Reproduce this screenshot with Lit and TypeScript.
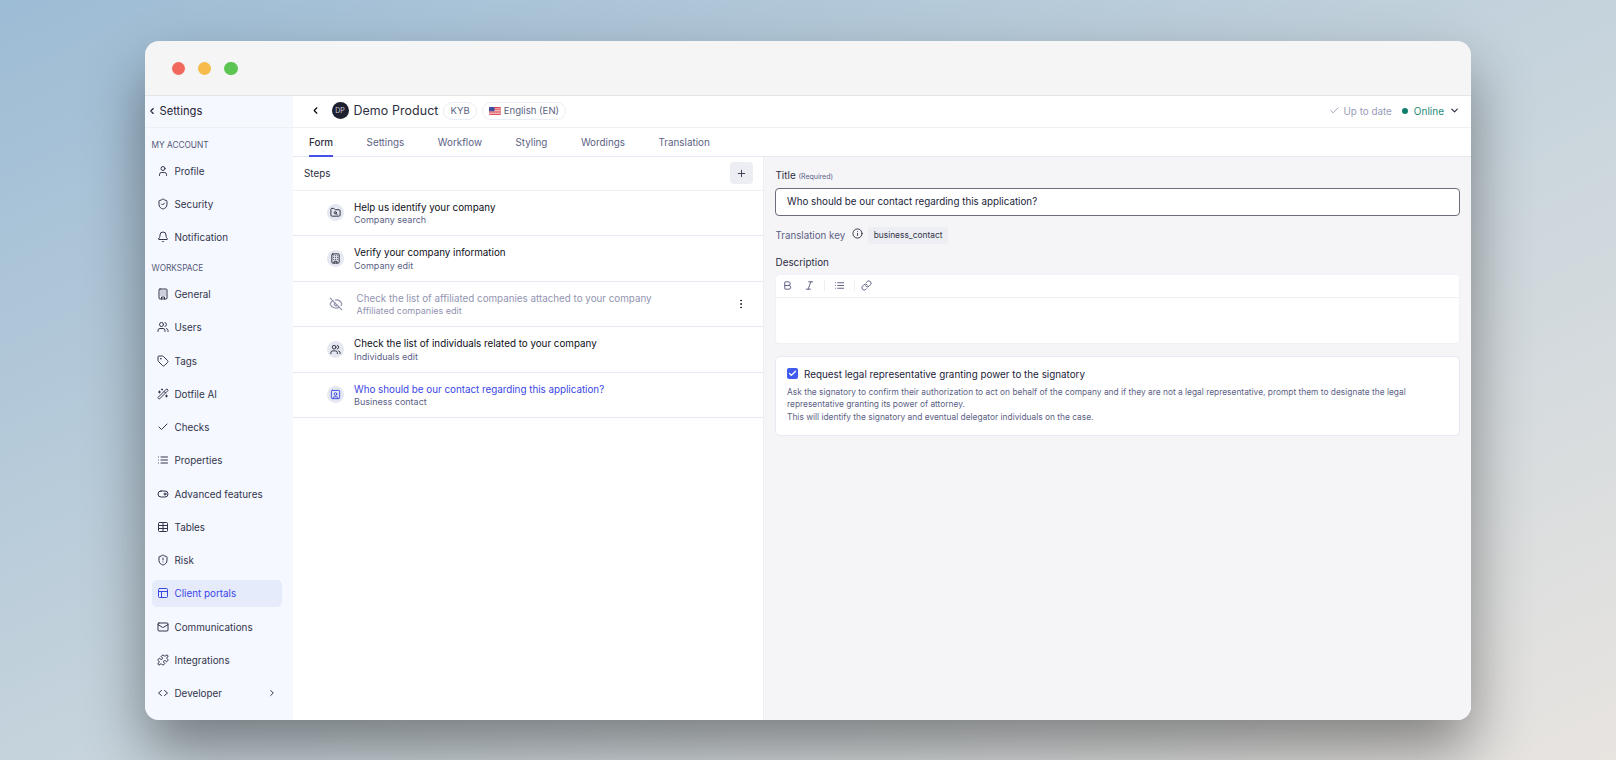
import { LitElement, html, css, svg } from "lit";
import { customElement } from "lit/decorators.js";

const S = {
  user: svg`<path d="M19 21v-2a4 4 0 0 0-4-4H9a4 4 0 0 0-4 4v2"/><circle cx="12" cy="7" r="4"/>`,
  shieldCheck: svg`<path d="M20 13c0 5-3.5 7.5-7.66 8.95a1 1 0 0 1-.67-.01C7.5 20.5 4 18 4 13V6a1 1 0 0 1 1-1c2 0 4.5-1.2 6.24-2.72a1.17 1.17 0 0 1 1.52 0C14.51 3.81 17 5 19 5a1 1 0 0 1 1 1z"/><path d="m9 12 2 2 4-4"/>`,
  bell: svg`<path d="M10.268 21a2 2 0 0 0 3.464 0"/><path d="M3.262 15.326A1 1 0 0 0 4 17h16a1 1 0 0 0 .74-1.673C19.41 13.956 18 12.499 18 8A6 6 0 0 0 6 8c0 4.499-1.411 5.956-2.738 7.326"/>`,
  building: svg`<rect x="4" y="2" width="16" height="20" rx="2"/><path d="M9 22v-4h6v4"/><path d="M8 6h.01M16 6h.01M12 6h.01M12 10h.01M12 14h.01M16 10h.01M16 14h.01M8 10h.01M8 14h.01"/>`,
  users: svg`<path d="M16 21v-2a4 4 0 0 0-4-4H6a4 4 0 0 0-4 4v2"/><circle cx="9" cy="7" r="4"/><path d="M22 21v-2a4 4 0 0 0-3-3.87"/><path d="M16 3.13a4 4 0 0 1 0 7.75"/>`,
  tag: svg`<path d="M12.586 2.586A2 2 0 0 0 11.172 2H4a2 2 0 0 0-2 2v7.172a2 2 0 0 0 .586 1.414l8.704 8.704a2.426 2.426 0 0 0 3.42 0l6.58-6.58a2.426 2.426 0 0 0 0-3.42z"/><circle cx="7.5" cy="7.5" r=".5"/>`,
  wand: svg`<path d="m21.64 3.64-1.28-1.28a1.21 1.21 0 0 0-1.72 0L2.36 18.64a1.21 1.21 0 0 0 0 1.72l1.28 1.28a1.2 1.2 0 0 0 1.72 0L21.64 5.36a1.2 1.2 0 0 0 0-1.72"/><path d="m14 7 3 3"/><path d="M5 6v4M19 14v4M10 2v2M7 8H3M21 16h-4M11 3H9"/>`,
  check: svg`<path d="M20 6 9 17l-5-5"/>`,
  list: svg`<path d="M3 12h.01M3 18h.01M3 6h.01M8 12h13M8 18h13M8 6h13"/>`,
  toggle: svg`<rect x="2" y="6" width="20" height="12" rx="6"/><circle cx="16" cy="12" r="2"/>`,
  table: svg`<path d="M12 3v18"/><rect x="3" y="3" width="18" height="18" rx="2"/><path d="M3 9h18M3 15h18"/>`,
  shieldAlert: svg`<path d="M20 13c0 5-3.5 7.5-7.66 8.95a1 1 0 0 1-.67-.01C7.5 20.5 4 18 4 13V6a1 1 0 0 1 1-1c2 0 4.5-1.2 6.24-2.72a1.17 1.17 0 0 1 1.52 0C14.51 3.81 17 5 19 5a1 1 0 0 1 1 1z"/><path d="M12 8v4M12 16h.01"/>`,
  layout: svg`<rect x="3" y="3" width="18" height="18" rx="2"/><path d="M3 9h18M9 21V9"/>`,
  mail: svg`<path d="m22 7-8.991 5.727a2 2 0 0 1-2.009 0L2 7"/><rect x="2" y="4" width="20" height="16" rx="2"/>`,
  puzzle: svg`<path d="M15.39 4.39a1 1 0 0 0 1.68-.474 2.5 2.5 0 1 1 3.014 3.015 1 1 0 0 0-.474 1.68l1.683 1.682a2.414 2.414 0 0 1 0 3.414L19.61 15.39a1 1 0 0 1-1.68-.474 2.5 2.5 0 1 0-3.014 3.015 1 1 0 0 1 .474 1.68l-1.683 1.682a2.414 2.414 0 0 1-3.414 0L8.61 19.61a1 1 0 0 0-1.68.474 2.5 2.5 0 1 1-3.014-3.015 1 1 0 0 0 .474-1.68l-1.683-1.682a2.414 2.414 0 0 1 0-3.414L4.39 8.61a1 1 0 0 1 1.68.474 2.5 2.5 0 1 0 3.014-3.015 1 1 0 0 1-.474-1.68l1.683-1.682a2.414 2.414 0 0 1 3.414 0z"/>`,
  code: svg`<path d="m9 7-6 5 6 5M15 7l6 5-6 5"/>`,
  chevR: svg`<path d="m9 18 6-6-6-6"/>`,
  chevL: svg`<path d="m15 18-6-6 6-6"/>`,
  chevD: svg`<path d="m6 9 6 6 6-6"/>`,
  folder: svg`<path d="M20 20a2 2 0 0 0 2-2V8a2 2 0 0 0-2-2h-7.9a2 2 0 0 1-1.69-.9L9.6 3.9A2 2 0 0 0 7.93 3H4a2 2 0 0 0-2 2v13a2 2 0 0 0 2 2Z"/><circle cx="11.5" cy="12.5" r="2.5"/><path d="M13.3 14.3 16 17"/>`,
  eyeOff: svg`<path d="M10.733 5.076a10.744 10.744 0 0 1 11.205 6.575 1 1 0 0 1 0 .696 10.747 10.747 0 0 1-1.444 2.49"/><path d="M14.084 14.158a3 3 0 0 1-4.242-4.242"/><path d="M17.479 17.499a10.75 10.75 0 0 1-15.417-5.151 1 1 0 0 1 0-.696 10.75 10.75 0 0 1 4.446-5.143"/><path d="m2 2 20 20"/>`,
  squareUser: svg`<rect x="3" y="3" width="18" height="18" rx="2"/><circle cx="12" cy="11" r="3"/><path d="M7 21v-2a2 2 0 0 1 2-2h6a2 2 0 0 1 2 2v2"/>`,
  bold: svg`<path d="M6 12h9a4 4 0 0 1 0 8H7a1 1 0 0 1-1-1V5a1 1 0 0 1 1-1h7a4 4 0 0 1 0 8"/>`,
  italic: svg`<path d="M19 4h-9M14 20H5M15 4 9 20"/>`,
  link: svg`<path d="M10 13a5 5 0 0 0 7.54.54l3-3a5 5 0 0 0-7.07-7.07l-1.72 1.71"/><path d="M14 11a5 5 0 0 0-7.54-.54l-3 3a5 5 0 0 0 7.07 7.07l1.71-1.71"/>`,
  info: svg`<circle cx="12" cy="12" r="10"/><path d="M12 16v-4M12 8h.01"/>`,
  plus: svg`<path d="M5 12h14M12 5v14"/>`,
  more: svg`<circle cx="12" cy="12" r="1"/><circle cx="12" cy="5" r="1"/><circle cx="12" cy="19" r="1"/>`,
};

const ic = (p: unknown, size = 12, sw = 2) => html`<svg class="ic" width=${size} height=${size} viewBox="0 0 24 24" fill="none" stroke="currentColor" stroke-width=${sw} stroke-linecap="round" stroke-linejoin="round">${p}</svg>`;

type Nav = { icon: unknown; label: string; active?: boolean; chev?: boolean };
const account: Nav[] = [
  { icon: S.user, label: "Profile" },
  { icon: S.shieldCheck, label: "Security" },
  { icon: S.bell, label: "Notification" },
];
const workspace: Nav[] = [
  { icon: S.building, label: "General" },
  { icon: S.users, label: "Users" },
  { icon: S.tag, label: "Tags" },
  { icon: S.wand, label: "Dotfile AI" },
  { icon: S.check, label: "Checks" },
  { icon: S.list, label: "Properties" },
  { icon: S.toggle, label: "Advanced features" },
  { icon: S.table, label: "Tables" },
  { icon: S.shieldAlert, label: "Risk" },
  { icon: S.layout, label: "Client portals", active: true },
  { icon: S.mail, label: "Communications" },
  { icon: S.puzzle, label: "Integrations" },
  { icon: S.code, label: "Developer", chev: true },
];
const tabs = ["Form", "Settings", "Workflow", "Styling", "Wordings", "Translation"];
type Step = { icon: unknown; title: string; sub: string; state?: string };
const steps: Step[] = [
  { icon: S.folder, title: "Help us identify your company", sub: "Company search" },
  { icon: S.building, title: "Verify your company information", sub: "Company edit" },
  { icon: S.eyeOff, title: "Check the list of affiliated companies attached to your company", sub: "Affiliated companies edit", state: "hidden" },
  { icon: S.users, title: "Check the list of individuals related to your company", sub: "Individuals edit" },
  { icon: S.squareUser, title: "Who should be our contact regarding this application?", sub: "Business contact", state: "current" },
];

@customElement("app-root")
export class AppRoot extends LitElement {
  static styles = css`
    :host { display: block; font-family: Inter, "Noto Sans", sans-serif; }
    * { box-sizing: border-box; }
    .ic { flex: none; display: block; }
    .desk {
      width: 1616px; height: 760px; overflow: hidden; padding: 40.5px 145px 40.5px;
      background: linear-gradient(to bottom right, #9dbcd5 0%, #c5d3dc 50%, #e8e4e0 100%);
    }
    .win {
      height: 679px; border-radius: 14px; overflow: hidden; display: flex; flex-direction: column;
      background: #f5f5f5; box-shadow: 0 30px 60px rgba(0,0,0,.42);
    }
    .bar { height: 55.5px; flex: none; display: flex; align-items: center; gap: 12.8px; padding: 1px 0 0 26.5px; border-bottom: 1px solid #e4e5e8; }
    .dot { width: 13.5px; height: 13.5px; border-radius: 50%; }
    .body { flex: 1; display: flex; min-height: 0; }
    .side { width: 148px; flex: none; background: #f5f8ff; display: flex; flex-direction: column; }
    .side-head { height: 32px; flex: none; display: flex; align-items: center; gap: 2.5px; padding: 0 0 2px 2px; border-bottom: 1px solid #eef0f6; font-size: 11.2px; color: #1f2233; }
    .sec { height: 12px; margin: 11px 0 0 6.5px; font-size: 8.3px; line-height: 12px; color: #55587a; }
    .navlist { display: flex; flex-direction: column; gap: 5.5px; padding: 6px 11px 0 7px; }
    .sec.two { margin-top: 11px; }
    .nav { height: 27.75px; border-radius: 5px; display: flex; align-items: center; gap: 5.5px; padding-left: 5px; font-size: 9.85px; color: #32354a; }
    .nav.active { background: #e6ebfc; color: #3a46e6; }
    .nav .grow { flex: 1; }
    .nav .end { margin-right: 5px; }
    .main { flex: 1; display: flex; flex-direction: column; min-width: 0; background: #fff; }
    .top { height: 31.5px; flex: none; display: flex; align-items: center; padding: 0 11px 1px 16.5px; border-bottom: 1px solid #eef0f6; }
    .avatar { width: 17px; height: 17px; border-radius: 50%; margin-left: 11px; background: #1e2030; color: #cfd1dc; font-size: 7px; display: flex; align-items: center; justify-content: center; }
    .pname { margin-left: 5px; font-size: 12.4px; color: #2c2e3e; letter-spacing: .1px; }
    .pill { height: 18px; border: 1px solid #eceef5; border-radius: 9px; display: flex; align-items: center; gap: 3px; padding: 0 6px; font-size: 9.6px; color: #5c5f80; margin-left: 5px; }
    .spacer { flex: 1; }
    .sync { display: flex; align-items: center; gap: 4px; font-size: 9.85px; color: #9a9cb8; }
    .online { display: flex; align-items: center; font-size: 10px; color: #1f8a75; margin-left: 10px; }
    .online i { width: 6px; height: 6px; border-radius: 50%; background: #0f7f6c; margin-right: 6px; }
    .online .ic { color: #2a2c3c; margin-left: 5px; }
    .tabs { height: 29px; flex: none; display: flex; gap: 33.5px; padding-left: 16px; border-bottom: 1px solid #e6e8f2; font-size: 9.85px; color: #5c5f85; }
    .tab { display: flex; align-items: center; height: 29px; border-bottom: 2px solid transparent; padding-top: 1px; }
    .tab.on { color: #2c2e3e; font-weight: 500; border-bottom-color: #4750e6; }
    .split { flex: 1; display: flex; min-height: 0; }
    .left { width: 471px; flex: none; border-right: 1px solid #eceef4; }
    .sh { height: 34px; display: flex; align-items: center; justify-content: space-between; padding: 0 10px 0 11px; border-bottom: 1px solid #eef0f6; font-size: 9.85px; color: #2c2e3e; }
    .add { width: 23px; height: 22px; border-radius: 4px; background: #eceef3; color: #33354a; display: flex; align-items: center; justify-content: center; }
    .step { height: 45.5px; display: flex; align-items: center; padding: 0 16px 0 33.5px; border-bottom: 1px solid #e6e8f2; }
    .cir { width: 17px; height: 17px; border-radius: 50%; background: #e6e8f1; color: #222433; display: flex; align-items: center; justify-content: center; margin-right: 10.5px; flex: none; }
    .txt { flex: 1; display: flex; flex-direction: column; gap: .5px; padding-top: 1px; }
    .t { font-size: 9.8px; line-height: 13px; color: #0d0e18; font-weight: 420; }
    .s { font-size: 9px; line-height: 12px; color: #5c5f85; }
    .step.hidden .cir { background: none; color: #9092ae; margin-left: 1px; margin-right: 12px; }
    .step.hidden .t { color: #9294b0; font-weight: 400; }
    .step.hidden .s { color: #9294b0; }
    .step.current .cir { color: #3a46e6; }
    .step.current .t { color: #3a46e6; font-weight: 400; }
    .step .more { color: #222433; }
    .right { flex: 1; background: #f5f5f8; padding: 11px 11px 0 10.5px; display: flex; flex-direction: column; }
    .lab { font-size: 9.9px; line-height: 14px; color: #2c2e3e; padding-left: 1px; }
    .lab small { font-size: 7px; color: #5c5f85; }
    .input { height: 27.5px; margin-top: 4.5px; background: #fff; border: 1px solid #6b6d78; border-radius: 4px; padding-left: 11.5px; display: flex; align-items: center; font-size: 9.8px; color: #22243a; }
    .key { display: flex; align-items: center; margin-top: 10.5px; padding-left: 1px; height: 18px; font-size: 9.75px; color: #5c5f85; }
    .key .ic { margin: -4px 0 0 7px; color: #2c2e3e; }
    .chip { margin-left: 5px; height: 17px; padding: 0 5.5px; border-radius: 3px; background: #eceef3; color: #33354a; font-size: 8.4px; display: flex; align-items: center; }
    .lab.desc { margin-top: 11px; }
    .editor { margin-top: 4.5px; height: 70px; background: #fff; border-radius: 4px; border: 1px solid #f0f1f6; }
    .tools { height: 23px; display: flex; align-items: center; padding-left: 6px; border-bottom: 1px solid #eef0f6; color: #55587a; }
    .tools .ic { margin-right: 11px; }
    .tools .sep { width: 1px; height: 11px; background: #eceef4; margin: 0 9px 0 -2px; }
    .tools .sep.b { margin-right: 6px; }
    .card { margin-top: 12px; height: 80px; background: #fff; border: 1px solid #e6e8f2; border-radius: 5px; padding: 11px 11.5px 0; }
    .chk { display: flex; align-items: center; gap: 6px; font-size: 9.85px; color: #22243a; }
    .box { width: 11px; height: 11px; border-radius: 2px; background: #3f5bf0; color: #fff; display: flex; align-items: center; justify-content: center; }
    .help { margin-top: 6.5px; font-size: 8.4px; line-height: 12.4px; color: #5c5f85; }
  `;

  private navItem(n: Nav) {
    return html`<div class="nav ${n.active ? "active" : ""}">${ic(n.icon, 12, 2)}<span class="grow">${n.label}</span>${n.chev ? html`<span class="end">${ic(S.chevR, 10, 2.4)}</span>` : ""}</div>`;
  }

  render() {
    return html`<div class="desk"><div class="win">
      <div class="bar">
        <span class="dot" style="background:#f0695c"></span>
        <span class="dot" style="background:#f6bb4a"></span>
        <span class="dot" style="background:#5cc552"></span>
      </div>
      <div class="body">
        <aside class="side">
          <div class="side-head">${ic(S.chevL, 10, 2.6)}<span>Settings</span></div>
          <div class="sec">MY ACCOUNT</div>
          <div class="navlist">${account.map((n) => this.navItem(n))}</div>
          <div class="sec two">WORKSPACE</div>
          <div class="navlist">${workspace.map((n) => this.navItem(n))}</div>
        </aside>
        <div class="main">
          <div class="top">
            ${ic(S.chevL, 11, 2.4)}
            <div class="avatar">DP</div>
            <span class="pname">Demo Product</span>
            <span class="pill">KYB</span>
            <span class="pill">
              <svg width="12" height="8" viewBox="0 0 12 8"><rect width="12" height="8" rx="1" fill="#e2464f"/><path d="M0 1.8h12M0 3.4h12M0 5h12M0 6.6h12" stroke="#f4f4f8" stroke-width=".7"/><rect width="5.5" height="4.2" rx=".8" fill="#3f4f9c"/></svg>
              English (EN)
            </span>
            <span class="spacer"></span>
            <span class="sync">${ic(S.check, 11, 2)}Up to date</span>
            <span class="online"><i></i>Online${ic(S.chevD, 11, 2.6)}</span>
          </div>
          <div class="tabs">${tabs.map((t, i) => html`<div class="tab ${i === 0 ? "on" : ""}">${t}</div>`)}</div>
          <div class="split">
            <section class="left">
              <div class="sh"><span>Steps</span><span class="add">${ic(S.plus, 11, 2)}</span></div>
              ${steps.map((s) => html`<div class="step ${s.state ?? ""}">
                <span class="cir">${ic(s.icon, s.state === "hidden" ? 14 : 11, 2)}</span>
                <div class="txt"><span class="t">${s.title}</span><span class="s">${s.sub}</span></div>
                ${s.state === "hidden" ? html`<span class="more">${ic(S.more, 12, 2)}</span>` : ""}
              </div>`)}
            </section>
            <section class="right">
              <div class="lab">Title <small>(Required)</small></div>
              <div class="input">Who should be our contact regarding this application?</div>
              <div class="key">Translation key${ic(S.info, 11, 2)}<span class="chip">business_contact</span></div>
              <div class="lab desc">Description</div>
              <div class="editor">
                <div class="tools">
                  ${ic(S.bold, 11, 2)}${ic(S.italic, 11, 2)}<span class="sep"></span>${ic(S.list, 11, 2)}<span class="sep b"></span>${ic(S.link, 11, 2)}
                </div>
              </div>
              <div class="card">
                <div class="chk"><span class="box">${ic(S.check, 9, 3.5)}</span>Request legal representative granting power to the signatory</div>
                <div class="help">Ask the signatory to confirm their authorization to act on behalf of the company and if they are not a legal representative, prompt them to designate the legal representative granting its power of attorney.<br>This will identify the signatory and eventual delegator individuals on the case.</div>
              </div>
            </section>
          </div>
        </div>
      </div>
    </div></div>`;
  }
}
